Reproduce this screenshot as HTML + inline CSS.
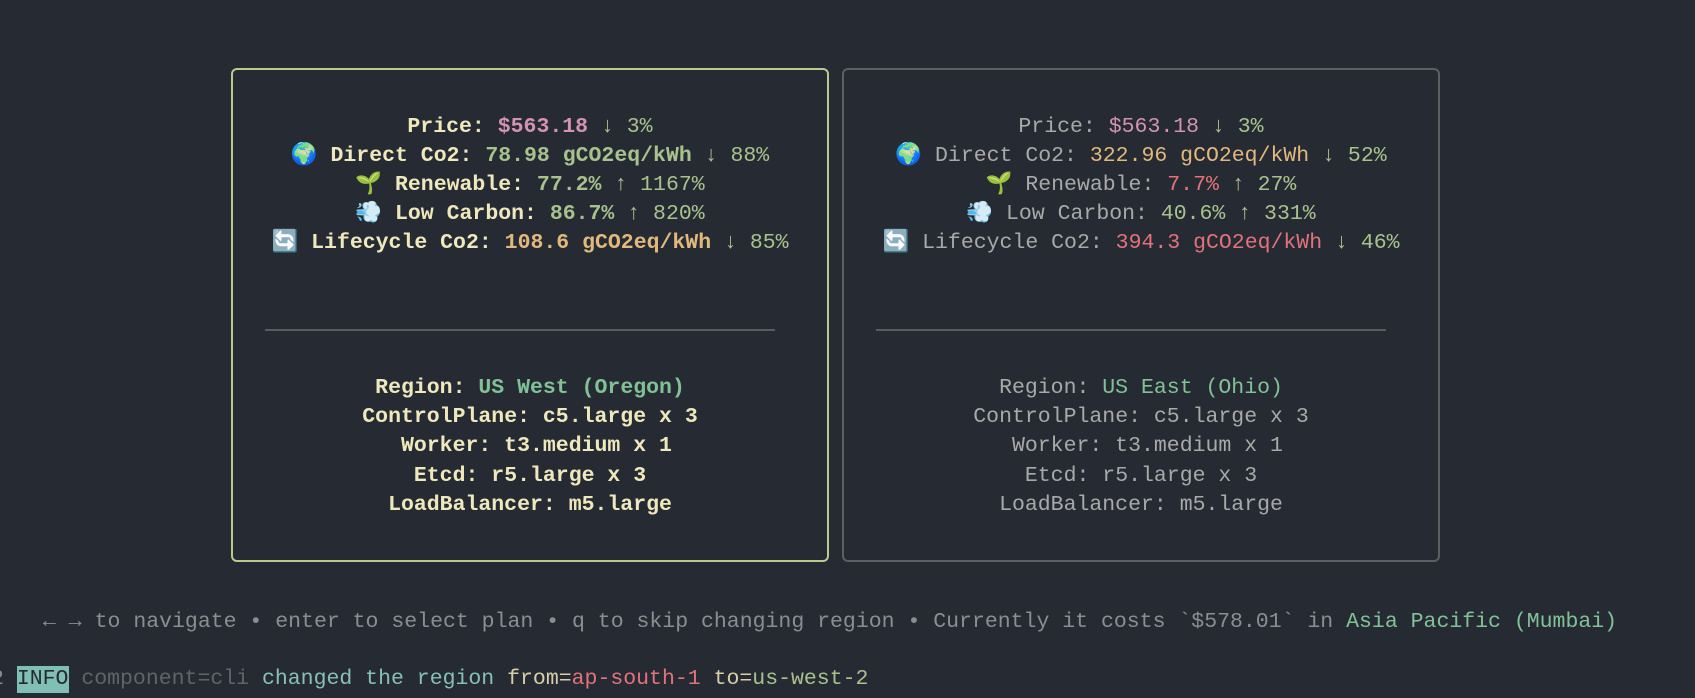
<!DOCTYPE html>
<html><head><meta charset="utf-8"><style>
html,body{margin:0;padding:0;background:#262b33;width:1695px;height:698px;overflow:hidden;font-family:"Liberation Mono","DejaVu Sans Mono",monospace;font-size:21.5px;}
.panel{position:absolute;top:68px;width:598px;height:494px;border-radius:6px;box-sizing:border-box;}
#l{left:231px;border:2px solid #b7cc8c;color:#efe8bd;font-weight:bold;}
#r{left:842px;border:2px solid #5b5f64;color:#a9a9a9;}
.ln{position:absolute;left:0;width:100%;text-align:center;white-space:pre;line-height:29px;}
.hr{position:absolute;top:259px;left:32px;right:52px;height:2px;background:#5a5b5c;}
.pk{color:#d392b6}.gr{color:#a9c28d}.or{color:#e1b97d}.rd{color:#e3727a}.rg{color:#80c296}
.n{font-weight:normal}
.ft{position:absolute;white-space:pre;line-height:29px;}
</style></head><body>
<div class="panel" id="l">
<div class="ln" style="top:43px">Price: <span class="pk">$563.18</span> <span class="gr n">↓ 3%</span></div>
<div class="ln" style="top:72px">🌍 Direct Co2: <span class="gr">78.98 gCO2eq/kWh</span> <span class="gr n">↓ 88%</span></div>
<div class="ln" style="top:101px">🌱 Renewable: <span class="gr">77.2%</span> <span class="gr n">↑ 1167%</span></div>
<div class="ln" style="top:130px">💨 Low Carbon: <span class="gr">86.7%</span> <span class="gr n">↑ 820%</span></div>
<div class="ln" style="top:159px">🔄 Lifecycle Co2: <span class="or">108.6 gCO2eq/kWh</span> <span class="gr n">↓ 85%</span></div>
<div class="hr"></div>
<div class="ln" style="top:304px">Region: <span class="rg">US West (Oregon)</span></div>
<div class="ln" style="top:333px">ControlPlane: c5.large x 3</div>
<div class="ln" style="top:362px"> Worker: t3.medium x 1</div>
<div class="ln" style="top:392px">Etcd: r5.large x 3</div>
<div class="ln" style="top:421px">LoadBalancer: m5.large</div>
</div>
<div class="panel" id="r">
<div class="ln" style="top:43px">Price: <span class="pk">$563.18</span> <span class="gr">↓ 3%</span></div>
<div class="ln" style="top:72px">🌍 Direct Co2: <span class="or">322.96 gCO2eq/kWh</span> <span class="gr">↓ 52%</span></div>
<div class="ln" style="top:101px">🌱 Renewable: <span class="rd">7.7%</span> <span class="gr">↑ 27%</span></div>
<div class="ln" style="top:130px">💨 Low Carbon: <span class="gr">40.6%</span> <span class="gr">↑ 331%</span></div>
<div class="ln" style="top:159px">🔄 Lifecycle Co2: <span class="rd">394.3 gCO2eq/kWh</span> <span class="gr">↓ 46%</span></div>
<div class="hr"></div>
<div class="ln" style="top:304px">Region: <span class="rg">US East (Ohio)</span></div>
<div class="ln" style="top:333px">ControlPlane: c5.large x 3</div>
<div class="ln" style="top:362px"> Worker: t3.medium x 1</div>
<div class="ln" style="top:392px">Etcd: r5.large x 3</div>
<div class="ln" style="top:421px">LoadBalancer: m5.large</div>
</div>
<div class="ft" style="left:43px;top:608px;color:#8b8e91">← → to navigate • enter to select plan • q to skip changing region • Currently it costs `$578.01` in <span class="rg">Asia Pacific (Mumbai)</span></div>
<div style="position:absolute;left:17px;top:666px;width:52px;height:27px;background:#7fbfb4"></div>
<div class="ft" style="left:-9px;top:665px;color:#8b8e91">2 <span style="color:#262b33">INFO</span> <span style="color:#5f6469">component=cli</span> <span style="color:#86c1b9">changed the region</span> <span style="color:#d8cfa8">from=</span><span class="rd">ap-south-1</span> <span style="color:#d8cfa8">to=</span><span class="gr">us-west-2</span></div>
</body></html>
